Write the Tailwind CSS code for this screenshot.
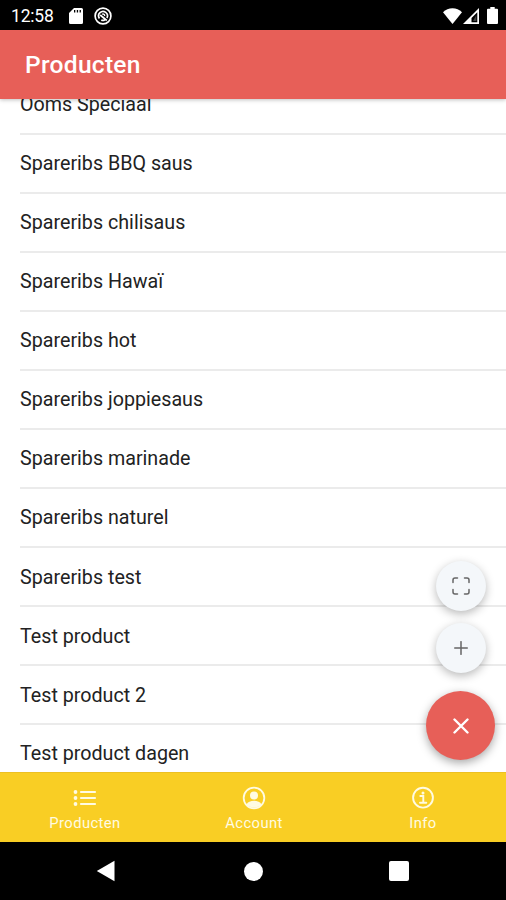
<!DOCTYPE html>
<html lang="nl">
<head>
  <meta charset="UTF-8" />
  <meta name="viewport" content="width=device-width, initial-scale=1.0" />
  <title>Producten</title>
  <script src="https://cdn.jsdelivr.net/npm/@tailwindcss/browser@4"></script>
</head>
<body class="bg-black font-['Roboto',sans-serif]">
  <div class="relative flex h-[900px] w-[506px] flex-col overflow-hidden">
    <!-- Status bar -->
    <div class="flex h-[30px] shrink-0 items-center bg-black pt-px pl-[11px] pr-[8px] text-white">
      <span class="w-[58px] pt-0.5 text-[17.5px] leading-none tracking-[-0.2px]">12:58</span>
      <svg class="h-4 w-[14px]" viewBox="0 0 14 16" fill="currentColor">
        <path fill-rule="evenodd" d="M5 0h7.500a1.500 1.500 0 0 1 1.500 1.500v13a1.500 1.500 0 0 1-1.500 1.500h-11A1.500 1.500 0 0 1 0 14.500V5zM5 2v2.500h1.300V2zM7.800 2v2.500h1.300V2zM10.600 2v2.500h1.300V2z" />
      </svg>
      <svg class="ml-[11px] size-[18px]" viewBox="0 0 18 18" fill="none" stroke="currentColor">
        <circle cx="9" cy="9" r="7.900" stroke-width="1.700" />
        <path d="M5.400 11.400a4.400 4.400 0 1 1 7.500-.4M6.200 8l6.600 5.500M7.300 12.900c1 .6 2.300.6 3.400 0" stroke-width="1.700" />
        <path d="M8 7.300c1.500-.8 3 .3 2.700 1.900" stroke-width="1.300" />
      </svg>
      <svg class="ml-auto h-4 w-[19px]" viewBox="0 0 19 16" fill="currentColor">
        <path d="M9.500 16 0 4.200C5-1.200 14-1.200 19 4.200z" />
      </svg>
      <svg class="ml-px h-4 w-4" viewBox="0 0 16 16" fill="currentColor">
        <path fill-rule="evenodd" d="M16 0v16H0zM14.300 4.300 8.500 10v4.300h5.800z" />
        <path d="m10 13 3.300-6v6z" fill-opacity=".25" />
      </svg>
      <svg class="ml-[8px] h-[17px] w-[11px]" viewBox="0 0 11 17" fill="currentColor">
        <path d="M3.300 0h4.400v1.700H10a1 1 0 0 1 1 1V16a1 1 0 0 1-1 1H1a1 1 0 0 1-1-1V2.700a1 1 0 0 1 1-1h2.300z" />
      </svg>
    </div>

    <!-- Header -->
    <header class="z-10 flex h-[69px] shrink-0 items-center bg-[#e75f58] pt-0.5 pl-[25px] shadow-[0_1px_4px_rgba(0,0,0,0.25)]">
      <h1 class="text-[24.6px] leading-none font-medium tracking-[0.25px] text-white">Producten</h1>
    </header>

    <!-- Product list, scrolled down -->
    <main class="h-[673px] shrink-0 overflow-hidden bg-white">
      <ul class="-mt-[23px] pl-5 text-[19.7px] text-[#222]">
        <li class="flex h-[59.03px] items-center border-b-2 border-[#ebebeb] pt-px">Ooms Speciaal</li>
        <li class="flex h-[59.03px] items-center border-b-2 border-[#ebebeb] pt-px">Spareribs BBQ saus</li>
        <li class="flex h-[59.03px] items-center border-b-2 border-[#ebebeb] pt-px">Spareribs chilisaus</li>
        <li class="flex h-[59.03px] items-center border-b-2 border-[#ebebeb] pt-px">Spareribs Hawaï</li>
        <li class="flex h-[59.03px] items-center border-b-2 border-[#ebebeb] pt-px">Spareribs hot</li>
        <li class="flex h-[59.03px] items-center border-b-2 border-[#ebebeb] pt-px">Spareribs joppiesaus</li>
        <li class="flex h-[59.03px] items-center border-b-2 border-[#ebebeb] pt-px">Spareribs marinade</li>
        <li class="flex h-[59.03px] items-center border-b-2 border-[#ebebeb] pt-px">Spareribs naturel</li>
        <li class="flex h-[59.03px] items-center border-b-2 border-[#ebebeb] pt-0.5">Spareribs test</li>
        <li class="flex h-[59.03px] items-center border-b-2 border-[#ebebeb] pt-0.5">Test product</li>
        <li class="flex h-[59.03px] items-center border-b-2 border-[#ebebeb] pt-0.5">Test product 2</li>
        <li class="flex h-[58px] items-center">Test product dagen</li>
      </ul>
    </main>

    <!-- Floating action buttons -->
    <div class="absolute top-[561px] right-[11px] flex w-[69px] flex-col items-center">
      <button class="flex size-[50px] items-center justify-center rounded-full bg-[#f4f7fa] text-[#666] shadow-[0_3px_10px_rgba(0,0,0,0.28)]">
        <svg class="size-[18px]" viewBox="0 0 18 18" fill="none" stroke="currentColor" stroke-width="1.500" stroke-linecap="round">
          <path d="M1 5.500V3a2 2 0 0 1 2-2h2.500M12.500 1H15a2 2 0 0 1 2 2v2.500M17 12.500V15a2 2 0 0 1-2 2h-2.500M5.500 17H3a2 2 0 0 1-2-2v-2.500" />
        </svg>
      </button>
      <button class="mt-[12px] flex size-[50px] items-center justify-center rounded-full bg-[#f4f7fa] text-[#666] shadow-[0_3px_10px_rgba(0,0,0,0.28)]">
        <svg class="size-[14px]" viewBox="0 0 14 14" stroke="currentColor" stroke-width="1.500" stroke-linecap="round">
          <path d="M7 .7v12.600M.7 7h12.600" />
        </svg>
      </button>
      <button class="mt-[18px] flex size-[69px] items-center justify-center rounded-full bg-[#e75f58] text-white shadow-[0_3px_10px_rgba(0,0,0,0.35)]">
        <svg class="size-4" viewBox="0 0 16 16" stroke="currentColor" stroke-width="2.400" stroke-linecap="round">
          <path d="m1.500 1.500 13 13M14.500 1.500l-13 13" />
        </svg>
      </button>
    </div>

    <!-- Tab bar -->
    <nav class="z-10 grid h-[70px] shrink-0 grid-cols-[169px_169px_169px] border-t border-[#edc023] bg-[#f9ce24] pl-[0.5px] text-[14.8px] leading-none text-[#fffbe2]">
      <a class="flex flex-col items-center pt-[13px]">
        <svg class="size-6" viewBox="0 0 24 24" fill="none" stroke="currentColor" stroke-width="2.200" stroke-linecap="round">
          <path d="M8 6h14M8 12h14M8 18h14" />
          <g fill="currentColor" stroke="none">
            <circle cx="2.500" cy="6" r="1.900" />
            <circle cx="2.500" cy="12" r="1.900" />
            <circle cx="2.500" cy="18" r="1.900" />
          </g>
        </svg>
        <span class="mt-[6px] tracking-[0.4px]">Producten</span>
      </a>
      <a class="flex flex-col items-center pt-[13px]">
        <svg class="size-6" viewBox="0 0 24 24" fill="currentColor">
          <circle cx="12" cy="12" r="10.300" fill="none" stroke="currentColor" stroke-width="1.800" />
          <circle cx="12" cy="9.500" r="4" />
          <path d="M4.500 18.500c2-5 13-5 15 0a10.500 10.500 0 0 1-15 0z" />
        </svg>
        <span class="mt-[6px] tracking-[0.4px]">Account</span>
      </a>
      <a class="flex flex-col items-center pt-[13px]">
        <svg class="size-6" viewBox="0 0 24 24" fill="none" stroke="currentColor" stroke-width="1.900">
          <circle cx="12" cy="11.700" r="9.900" />
          <path d="M9.300 10h3v6.500M9 16.700h6.300" stroke-linecap="round" />
          <circle cx="12" cy="6.900" r="1.500" fill="currentColor" stroke="none" />
        </svg>
        <span class="mt-[6px] tracking-[0.4px]">Info</span>
      </a>
    </nav>

    <!-- Android navigation -->
    <div class="flex flex-1 items-center bg-black pl-24 text-white">
      <svg class="h-[22px] w-[19px]" viewBox="0 0 19 22" fill="currentColor">
        <path d="M18.500.8v20.400L.8 11z" />
      </svg>
      <div class="ml-[129px] size-[19px] rounded-full bg-white"></div>
      <div class="ml-[126px] size-5 rounded-xs bg-white"></div>
    </div>
  </div>
</body>
</html>
